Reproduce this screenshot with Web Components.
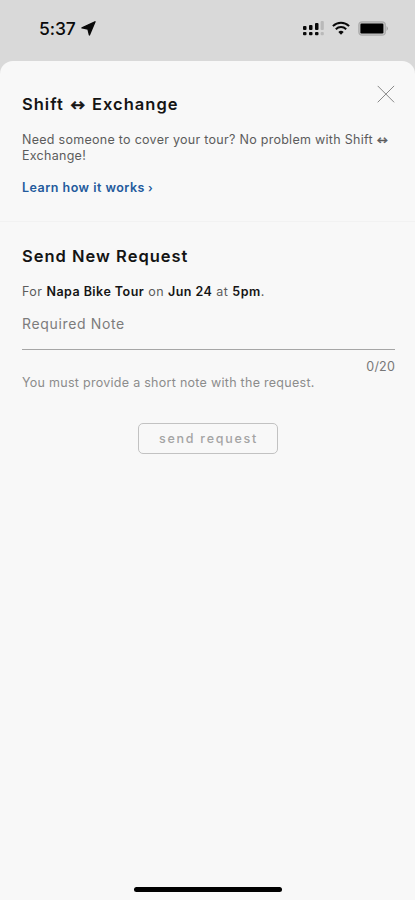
<!DOCTYPE html>
<html lang="en">
<head>
<meta charset="utf-8">
<meta name="viewport" content="width=device-width, initial-scale=1">
<title>Shift Exchange</title>
<style>
  html, body {
    margin: 0;
    height: 100%;
    overflow: hidden;
    background: #d9d9d9;
    font-family: Inter, "Liberation Sans", sans-serif;
  }
</style>
</head>
<body>
<shift-exchange-screen></shift-exchange-screen>

<script>
class StatusBar extends HTMLElement {
    constructor() {
        super();
        this.attachShadow({ mode: "open" });
        this.shadowRoot.innerHTML = `
      <style>
        :host {
            display: flex;
            justify-content: space-between;
            align-items: center;
            box-sizing: border-box;
            height: 61px;
            padding: 0 26px 5px 39px;
            color: #0a0a0a;
        }

        .clock, .icons {
            display: flex;
            align-items: center;
        }

        .time {
            font-size: 17.5px;
            font-weight: 500;
            letter-spacing: -0.1px;
        }

        .clock svg { margin-left: 5px; }
        .icons { gap: 8px; }
        svg { display: block; }
      </style>

      <div class="clock">
        <span class="time"><slot></slot></span>
        <svg width="15" height="15" viewBox="0 0 15 15"><path d="M14 .8 8.4 13.9 7 8 1 6.8Z" fill="#0a0a0a" stroke="#0a0a0a" stroke-width="1.4" stroke-linejoin="round"/></svg>
      </div>
      <div class="icons">
        <svg width="21" height="15" viewBox="0 0 21 15" fill="#0a0a0a">
          <rect x="0" y="5" width="3.5" height="4" rx="1"/><rect x="6" y="4" width="3.5" height="5" rx="1"/><rect x="12" y="2" width="3.5" height="7" rx="1"/>
          <rect x="0" y="11" width="3.5" height="3.3" rx="1"/><rect x="6" y="11" width="3.5" height="3.3" rx="1"/><rect x="12" y="11" width="3.5" height="3.3" rx="1"/>
          <g fill="#b9b9b9"><rect x="17.6" y="0" width="3.2" height="9" rx="1"/><rect x="17.6" y="11" width="3.2" height="3.3" rx="1"/></g>
        </svg>
        <svg width="18" height="14" viewBox="0 0 18 14" fill="none" stroke="#0a0a0a" stroke-width="2">
          <path d="M.9 5.1C5.5.5 12.5.5 17.1 5.1M3.8 8.2C6.8 5.4 11.2 5.4 14.2 8.2"/>
          <path d="M6.3 11Q9 8.7 11.7 11L9 13.8Z" fill="#0a0a0a" stroke="none"/>
        </svg>
        <svg width="31" height="15" viewBox="0 0 31 15">
          <rect x=".8" y=".8" width="26.6" height="13.4" rx="3.5" fill="#c4c4c4" stroke="#adadad" stroke-width="1.2"/>
          <rect x="2.4" y="2.6" width="23" height="9.8" rx="1.2" fill="#000"/>
          <path d="M28.6 5q2.4 2.5 0 5Z" fill="#9a9a9a"/>
        </svg>
      </div>
    `;
    }
}

class CloseButton extends HTMLElement {
    constructor() {
        super();
        this.attachShadow({ mode: "open" });
        this.shadowRoot.innerHTML = `
      <style>
        :host {
            display: block;
            width: 18px;
            height: 18px;
        }

        button {
            display: block;
            padding: 0;
            border: 0;
            background: none;
        }

        svg { display: block; }
      </style>

      <button aria-label="Close">
        <svg width="18" height="18" viewBox="0 0 18 18"><path d="M.7.9 17.1 17.3M17.1.9.7 17.3" stroke="#888" stroke-width="1"/></svg>
      </button>
    `;
    }
}

class SheetSection extends HTMLElement {
    constructor() {
        super();
        this.attachShadow({ mode: "open" });
        this.shadowRoot.innerHTML = `
      <style>
        :host {
            display: block;
            box-sizing: border-box;
            padding: 33px 20px 0 22px;
        }

        :host([divided]) {
            height: 161px;
            border-bottom: 1px solid #f2f2f2;
        }

        header {
            display: flex;
            justify-content: space-between;
            align-items: center;
            height: 20px;
        }

        h2 {
            margin: 0;
            font-size: 16.5px;
            font-weight: 600;
            letter-spacing: 1px;
            color: #141414;
        }

        ::slotted([slot="action"]) {
            position: relative;
            top: -10px;
        }
      </style>

      <header>
        <h2><slot name="title"></slot></h2>
        <slot name="action"></slot>
      </header>
      <slot></slot>
    `;
    }
}

class BodyText extends HTMLElement {
    constructor() {
        super();
        this.attachShadow({ mode: "open" });
        this.shadowRoot.innerHTML = `
      <style>
        :host {
            display: block;
            font-size: 12.5px;
            line-height: 16px;
            letter-spacing: 0.28px;
            color: #5c5c5c;
        }

        ::slotted(b) {
            font-weight: 600;
            color: #141414;
        }
      </style>
      <slot></slot>
    `;
    }
}

class LearnLink extends HTMLElement {
    constructor() {
        super();
        this.attachShadow({ mode: "open" });
        this.shadowRoot.innerHTML = `
      <style>
        :host {
            display: block;
            font-size: 12.5px;
            line-height: 16px;
        }

        a {
            font-weight: 600;
            letter-spacing: 0.48px;
            color: #235a9c;
            text-decoration: none;
        }
      </style>
      <a href="#"><slot></slot></a>
    `;
    }
}

class NoteField extends HTMLElement {
    constructor() {
        super();
        this.attachShadow({ mode: "open" });
        this.shadowRoot.innerHTML = `
      <style>
        :host { display: block; }

        .label {
            height: 34px;
            border-bottom: 1px solid #a6a6a6;
            font-size: 14px;
            line-height: 18px;
            letter-spacing: 0.65px;
            color: #7c7c7c;
        }

        .count {
            margin-top: 9px;
            font-size: 12.5px;
            line-height: 16px;
            letter-spacing: 0.2px;
            text-align: right;
            color: #777;
        }

        .hint {
            font-size: 12.5px;
            line-height: 16px;
            letter-spacing: 0.28px;
            color: #8c8c8c;
        }
      </style>

      <div class="label"><slot name="label"></slot></div>
      <div class="count"><slot name="count"></slot></div>
      <div class="hint"><slot name="hint"></slot></div>
    `;
    }
}

class SendButton extends HTMLElement {
    constructor() {
        super();
        this.attachShadow({ mode: "open" });
        this.shadowRoot.innerHTML = `
      <style>
        :host {
            display: flex;
            justify-content: center;
        }

        button {
            box-sizing: border-box;
            width: 140px;
            height: 31px;
            padding: 0 0 0 1px;
            border: 1px solid #c2c2c2;
            border-radius: 5px;
            background: none;
            font: 500 12.5px Inter, "Liberation Sans", sans-serif;
            letter-spacing: 1.75px;
            color: #a4a4a4;
        }
      </style>
      <button disabled><slot></slot></button>
    `;
    }
}

class ShiftExchangeScreen extends HTMLElement {
    constructor() {
        super();
        this.attachShadow({ mode: "open" });
        this.shadowRoot.innerHTML = `
      <style>
        :host {
            display: flex;
            flex-direction: column;
            height: 900px;
        }

        main {
            flex: 1;
            display: flex;
            flex-direction: column;
            border-radius: 13px 13px 0 0;
            background: #f8f8f8;
        }

        .intro { margin-top: 18px; }
        .link { margin-top: 16px; }
        .request { padding-top: 24px; }
        .for { margin-top: 18px; letter-spacing: 0.46px; }
        .note { margin-top: 15px; }
        .send { margin: 32px 1px 0 0; }

        .arrow {
            font-size: 0.7em;
            font-weight: 700;
            letter-spacing: 0.5px;
            line-height: 1;
            vertical-align: 0.1em;
            -webkit-text-stroke: 0.4px currentColor;
        }

        [slot="title"] .arrow {
            margin: 0 1px;
            -webkit-text-stroke-width: 0.7px;
        }

        .chevron {
            font-size: 0.9em;
            margin-left: -0.5px;
        }

        .home-indicator {
            width: 148px;
            height: 5px;
            margin: auto auto 8px;
            border-radius: 3px;
            background: #000;
        }
      </style>

      <status-bar>5:37</status-bar>
      <main>
        <sheet-section divided>
          <span slot="title">Shift <span class="arrow">↔</span> Exchange</span>
          <close-button slot="action"></close-button>
          <body-text class="intro">Need someone to cover your tour? No problem with Shift <span class="arrow">↔</span> Exchange!</body-text>
          <learn-link class="link">Learn how it works <span class="chevron">›</span></learn-link>
        </sheet-section>
        <sheet-section class="request">
          <span slot="title">Send New Request</span>
          <body-text class="for">For <b>Napa Bike Tour</b> on <b>Jun 24</b> at <b>5pm</b>.</body-text>
          <note-field class="note">
            <span slot="label">Required Note</span>
            <span slot="count">0/20</span>
            <span slot="hint">You must provide a short note with the request.</span>
          </note-field>
          <send-button class="send">send request</send-button>
        </sheet-section>
        <div class="home-indicator"></div>
      </main>
    `;
    }
}

customElements.define("status-bar", StatusBar);
customElements.define("close-button", CloseButton);
customElements.define("sheet-section", SheetSection);
customElements.define("body-text", BodyText);
customElements.define("learn-link", LearnLink);
customElements.define("note-field", NoteField);
customElements.define("send-button", SendButton);
customElements.define("shift-exchange-screen", ShiftExchangeScreen);
</script>
</body>
</html>
